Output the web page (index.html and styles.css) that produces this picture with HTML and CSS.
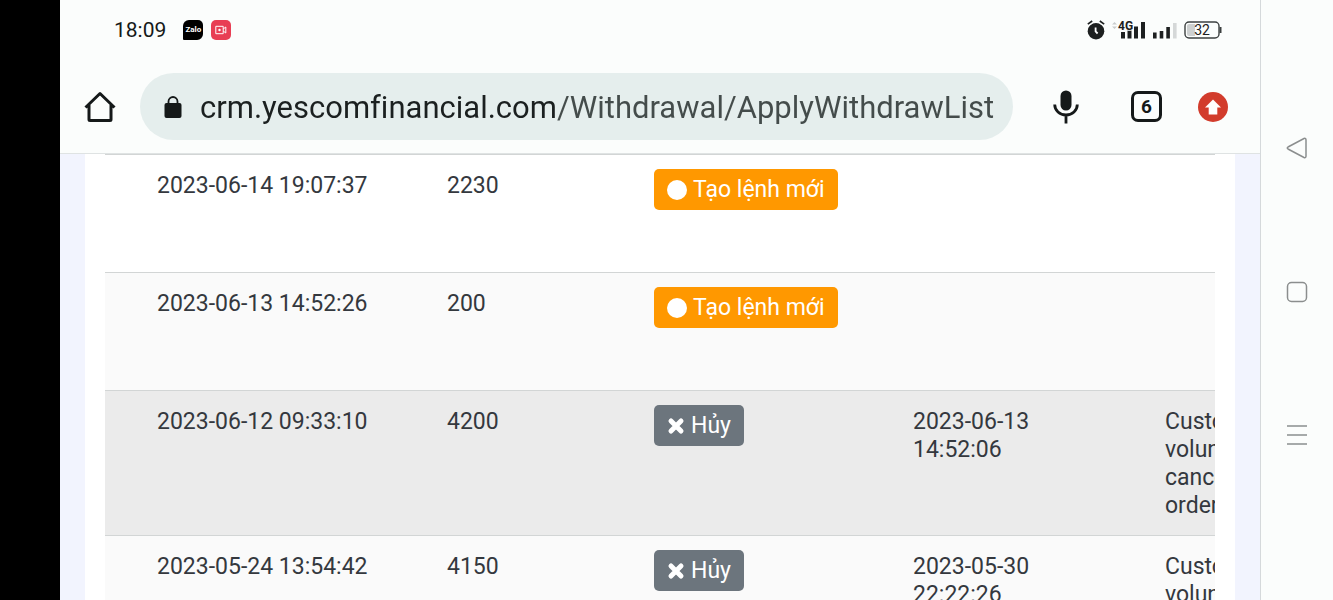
FILE: index.html
```html
<!DOCTYPE html>
<html lang="vi">

<head>
    <meta charset="UTF-8">
    <meta name="viewport" content="width=device-width, initial-scale=1.0">
    <title>ApplyWithdrawList</title>
    <link rel="stylesheet" href="styles.css">
</head>

<body>
    <div class="notch"></div>

    <div class="screen">
        <header class="browser">
            <div class="status-bar">
                <span class="clock">18:09</span>
                <span class="app-zalo">Zalo</span>
                <span class="app-record">
                    <svg width="12" height="10" viewBox="0 0 12 10" fill="none" stroke="#fff">
                        <path d="M.8 1.3h7.4v7.4H.8zM8.2 4l2.6-2v6L8.2 6" />
                        <circle cx="4.5" cy="5" r="1.2" fill="#fff" stroke="none" />
                    </svg>
                </span>
                <div class="status-icons">
                    <!-- alarm -->
                    <svg width="18" height="20" viewBox="0 0 18 20">
                        <circle cx="9" cy="11.2" r="8.3" fill="#1d2020" />
                        <path d="M1 4.5 5.2 1.2M17 4.5 12.8 1.2" stroke="#fbfdfc" stroke-width="4" />
                        <path d="M.8 4.2 5.2 1M17.2 4.2 12.8 1" stroke="#1d2020" stroke-width="1.6" />
                        <path d="M8.6 7.5v4l2 2" fill="none" stroke="#fff" stroke-width="1.8" />
                    </svg>
                    <!-- 4G signal -->
                    <svg width="34" height="20" viewBox="0 0 34 20">
                        <path d="M0 4.5 2.5 2 5 4.5zM0 6.5 2.5 9 5 6.5z" fill="#c9cccc" />
                        <path d="M9 12h4v6.5H9zM15.5 10.5h4v8h-4zM22 6.5h4v12h-4zM29 2h4v16.5h-4z" fill="#1d2020" />
                        <text class="net-label" x="6" y="10">4G</text>
                    </svg>
                    <!-- second sim -->
                    <svg width="24" height="20" viewBox="0 0 24 20">
                        <path d="M0 12.5h3.6v6H0zM6.7 11h3.6v7.5H6.7zM13.3 7h3.6v11.500h-3.600z" fill="#1d2020" />
                        <path d="M20 3h3.6v15.5H20z" fill="#d5d8d8" />
                    </svg>
                    <!-- battery -->
                    <svg width="38" height="18" viewBox="0 0 38 18">
                        <path d="M5 3h6v12H5a2 2 0 0 1-2-2V5a2 2 0 0 1 2-2z" fill="#cdd0d0" />
                        <rect x="1" y="1" width="34" height="16" rx="4" fill="none" stroke="#3c4040" stroke-width="1.4" />
                        <path d="M36.5 6v6" stroke="#3c4040" stroke-width="2" />
                        <text class="battery-label" x="18" y="14">32</text>
                    </svg>
                </div>
            </div>

            <div class="toolbar">
                <button class="icon-btn" type="button" aria-label="Home">
                    <svg width="32" height="32" viewBox="0 0 32 32" fill="none" stroke="#151919" stroke-width="3">
                        <path d="M1.5 16.5 16 2.5l14.5 14M5 14v14.5q0 1 1 1h20q1 0 1-1V14" stroke-linejoin="round" />
                    </svg>
                </button>
                <label class="address">
                    <svg width="18" height="23" viewBox="0 0 18 23">
                        <rect x="0.5" y="7" width="17" height="15" rx="2" fill="#151919" />
                        <path d="M4.5 8V5.5a4.5 4.5 0 0 1 9 0V8" fill="none" stroke="#151919" stroke-width="1.8" />
                    </svg>
                    <input class="url" type="text" aria-label="Address" spellcheck="false"
                        value="crm.yescomfinancial.com/Withdrawal/ApplyWithdrawList">
                </label>
                <button class="icon-btn mic" type="button" aria-label="Voice search">
                    <svg width="26" height="34" viewBox="0 0 26 34">
                        <rect x="7.5" y="0.5" width="11" height="20" rx="5.5" fill="#151919" />
                        <path d="M1.7 14.5a11.3 10.5 0 0 0 22.6 0M13 25v8.5" fill="none" stroke="#151919" stroke-width="2.8" />
                    </svg>
                </button>
                <button class="tabs-btn" type="button">6</button>
                <button class="icon-btn" type="button" aria-label="Update">
                    <svg width="30" height="30" viewBox="0 0 30 30">
                        <circle cx="15" cy="15" r="15" fill="#d23c2c" />
                        <path d="M15 7.5 23 15.5h-3.7V22.5h-8.6v-7H7z" fill="#fff" />
                    </svg>
                </button>
            </div>
        </header>

        <main class="page">
            <div class="card">
                <div class="table-wrap">
                    <table class="orders">
                        <colgroup>
                            <col class="col-created">
                            <col class="col-amount">
                            <col class="col-status">
                            <col class="col-updated">
                            <col class="col-note">
                        </colgroup>
                        <tbody>
                            <tr>
                                <td>2023-06-14 19:07:37</td>
                                <td>2230</td>
                                <td class="status">
                                    <button class="btn btn-new" type="button"><span class="dot"></span>Tạo lệnh mới</button>
                                </td>
                                <td></td>
                                <td></td>
                            </tr>
                            <tr>
                                <td>2023-06-13 14:52:26</td>
                                <td>200</td>
                                <td class="status">
                                    <button class="btn btn-new" type="button"><span class="dot"></span>Tạo lệnh mới</button>
                                </td>
                                <td></td>
                                <td></td>
                            </tr>
                            <tr class="active">
                                <td>2023-06-12 09:33:10</td>
                                <td>4200</td>
                                <td class="status">
                                    <button class="btn btn-cancel" type="button">
                                        <svg width="18" height="18" viewBox="0 0 18 18">
                                            <path d="M4 4l10 10M14 4 4 14" stroke="#fff" stroke-width="5" stroke-linecap="round" />
                                        </svg>Hủy</button>
                                </td>
                                <td>2023-06-13 14:52:06</td>
                                <td>Customer voluntarily cancels order</td>
                            </tr>
                            <tr>
                                <td>2023-05-24 13:54:42</td>
                                <td>4150</td>
                                <td class="status">
                                    <button class="btn btn-cancel" type="button">
                                        <svg width="18" height="18" viewBox="0 0 18 18">
                                            <path d="M4 4l10 10M14 4 4 14" stroke="#fff" stroke-width="5" stroke-linecap="round" />
                                        </svg>Hủy</button>
                                </td>
                                <td>2023-05-30 22:22:26</td>
                                <td>Customer voluntarily cancels order</td>
                            </tr>
                        </tbody>
                    </table>
                </div>
            </div>
        </main>
    </div>

    <nav class="system-nav">
        <button class="icon-btn" type="button" aria-label="Back">
            <svg width="22" height="22" viewBox="0 0 22 22" fill="none" stroke="#8b8e8e" stroke-width="1.5">
                <path d="M2 10 18 1.5q2-.7 2 1.5v16q0 2.2-2 1.5L2 12q-1.5-1 0-2z" />
            </svg>
        </button>
        <button class="icon-btn" type="button" aria-label="Home screen">
            <svg width="22" height="22" viewBox="0 0 22 22" fill="none" stroke="#8b8e8e" stroke-width="1.5">
                <rect x="1.5" y="1.5" width="19" height="19" rx="4" />
            </svg>
        </button>
        <button class="icon-btn" type="button" aria-label="Recent apps">
            <svg width="22" height="22" viewBox="0 0 22 22" stroke="#8b8e8e" stroke-width="1.5">
                <path d="M1 2h20M1 11h20M1 20h20" />
            </svg>
        </button>
    </nav>
</body>

</html>
```
FILE: styles.css
```css
* {
    box-sizing: border-box;
}

body {
    margin: 0;
    height: 100vh;
    display: flex;
    overflow: hidden;
    background-color: #fbfdfc;
    font-family: Roboto, "Noto Sans", sans-serif;
    font-size: 23px;
    line-height: 28px;
    color: #34383e;
}

svg {
    display: block;
    flex-shrink: 0;
}

button {
    font-family: inherit;
    border: none;
    background: none;
    padding: 0;
}

.notch {
    width: 60px;
    flex-shrink: 0;
    background-color: #000;
}

.screen {
    flex: 1;
    min-width: 0;
    display: flex;
    flex-direction: column;
    border-right: 1px solid #d5d9db;
}

/* browser top */
.browser {
    border-bottom: 1px solid #dfe3e3;
    padding-bottom: 13px;
}

.status-bar {
    height: 60px;
    padding: 0 38px 0 54px;
    display: flex;
    align-items: center;
    color: #151919;
}

.clock {
    font-size: 21px;
    margin-right: 17px;
}

.app-zalo,
.app-record {
    width: 20px;
    height: 20px;
    border-radius: 5px;
    display: flex;
    align-items: center;
    justify-content: center;
    background-color: #000;
    color: #fff;
    font-size: 8px;
    font-weight: 700;
}

.app-zalo {
    border-radius: 6px 5px 6px 1px;
}

.app-record {
    margin-left: 8px;
    background-color: #e83e54;
}

.status-icons {
    margin-left: auto;
    display: flex;
    align-items: center;
    gap: 7px;
}

.net-label {
    font-size: 12px;
    font-weight: 700;
    fill: #1d2020;
    paint-order: stroke;
    stroke: #fbfdfc;
    stroke-width: 1px;
}

.battery-label {
    font-size: 14px;
    text-anchor: middle;
    fill: #1d2020;
}

.toolbar {
    padding: 13px 32px 0 24px;
    display: flex;
    align-items: center;
}

.address {
    flex: 1;
    height: 67px;
    margin-left: 24px;
    padding: 2px 16px 0 24px;
    border-radius: 34px;
    background-color: #e5eeed;
    display: flex;
    align-items: center;
    gap: 18px;
}

/* host is darker than the path */
.url {
    flex: 1;
    min-width: 0;
    height: 44px;
    padding: 0;
    border: none;
    outline: none;
    font-family: inherit;
    font-size: 31px;
    font-variant-ligatures: none;
    color: transparent;
    background: linear-gradient(to right, #1b2020 355px, #444c4b 355px);
    -webkit-background-clip: text;
    background-clip: text;
}

.mic {
    margin: 0 52px 0 40px;
}

.tabs-btn {
    width: 31px;
    height: 31px;
    margin-right: 36px;
    border: 3px solid #151919;
    border-radius: 7px;
    font-size: 19px;
    font-weight: 700;
    line-height: 24px;
    color: #151919;
}

/* page */
.page {
    flex: 1;
    min-height: 0;
    overflow: hidden;
    padding: 0 25px;
    background-color: #f2f4fe;
}

.card {
    padding: 0 20px;
    background-color: #fff;
}

.table-wrap {
    overflow: hidden;
}

.orders {
    width: 1204px;
    table-layout: fixed;
    border-spacing: 0;
}

.col-created {
    width: 326px;
}

.col-amount {
    width: 207px;
}

.col-status {
    width: 259px;
}

.col-updated {
    width: 252px;
}

.col-note {
    width: 160px;
}

.orders td {
    height: 118px;
    padding: 17px 16px 15px;
    vertical-align: top;
    border-top: 1px solid #d2d5d5;
}

.orders td:first-child {
    padding-left: 52px;
}

.orders td:nth-child(4) {
    padding-right: 32px;
}

.orders .status {
    padding-top: 14px;
}

.orders tr:nth-child(even) {
    background-color: #fafafa;
}

.orders .active {
    background-color: #ebebeb;
}

.btn {
    height: 41px;
    padding: 0 13px;
    border-radius: 5px;
    display: flex;
    align-items: center;
    gap: 6px;
    font-size: 23px;
    color: #fff;
}

.btn-new {
    background-color: #ff9800;
}

.btn-cancel {
    background-color: #6c757d;
}

.dot {
    width: 20px;
    height: 20px;
    border-radius: 50%;
    background-color: #fff;
}

/* android buttons */
.system-nav {
    width: 72px;
    flex-shrink: 0;
    padding: 137px 0 154px;
    display: flex;
    flex-direction: column;
    align-items: center;
    justify-content: space-between;
}
```
